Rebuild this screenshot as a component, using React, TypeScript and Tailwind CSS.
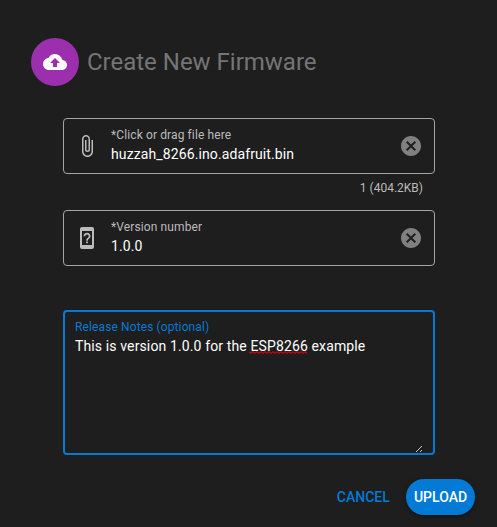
import type { ReactNode } from "react";
import { MdAttachFile, MdCancel, MdCloudUpload, MdDeviceUnknown } from "react-icons/md";

type FieldProps = { icon: ReactNode; label: string; value: string };

function Field({ icon, label, value }: FieldProps) {
  return (
    <div className="flex h-14 items-center rounded border border-[#a5a5a5] px-[11px]">
      <span className="mr-3 size-6 text-[#bbbbbb]">{icon}</span>
      <div className="flex-1 pb-[3px]">
        <div className="text-xs leading-[18px] tracking-[0.0094em] text-[#bbbbbb]">{label}</div>
        <div className="text-sm leading-5 tracking-[0.0080em] text-white">{value}</div>
      </div>
      <MdCancel className="size-6 text-[#808080]" />
    </div>
  );
}

// Spell-checker squiggle under a flagged word
function Misspelled({ children }: { children: ReactNode }) {
  return (
    <span className="relative inline-block">
      {children}
      <svg className="absolute -left-px bottom-[2px] h-[3px] w-[58px]" viewBox="0 0 58 3">
        <defs>
          <pattern id="squiggle" width="4" height="3" patternUnits="userSpaceOnUse">
            <path d="M-1 1.5 Q0 0.2 1 1.5 T3 1.5 T5 1.5" fill="none" stroke="#e3000f" strokeWidth="1.1" />
          </pattern>
        </defs>
        <rect width="58" height="3" fill="url(#squiggle)" />
      </svg>
    </span>
  );
}

function ResizeGrip() {
  return (
    <svg className="absolute right-[11px] bottom-px size-1.5" viewBox="0 0 6 6" shapeRendering="crispEdges" fill="#c8c8c8">
      {[0, 1, 2, 3, 4, 5].map((i) => (
        <rect key={i} x={i} y={5 - i} width="1" height="1" />
      ))}
      <rect x="4" y="5" width="1" height="1" />
      <rect x="5" y="4" width="1" height="1" />
    </svg>
  );
}

export default function App() {
  return (
    <div className="h-[527px] w-[497px] overflow-hidden bg-[#1e1e1e] pt-[38px] font-['Roboto',sans-serif]">
      <header className="flex h-12 items-center gap-2 pl-[31px]">
        <span className="flex size-12 items-center justify-center rounded-full bg-[#9c2fae] text-white">
          <MdCloudUpload className="size-6" />
        </span>
        <h1 className="text-2xl leading-8 tracking-[-0.01px] text-[#757575]">Create New Firmware</h1>
      </header>

      <main className="mt-8 mr-[62px] ml-[63px]">
        <Field icon={<MdAttachFile className="size-6" />} label="*Click or drag file here" value="huzzah_8266.ino.adafruit.bin" />
        <div className="h-9 pt-[8px] pr-3 text-right text-xs leading-3 text-[#bbbbbb]">1 (404.2KB)</div>
        <Field icon={<MdDeviceUnknown className="size-6" />} label="*Version number" value="1.0.0" />

        <div className="relative mt-11 h-[145px] rounded border-2 border-[#027ad6] px-[10px] pt-[6px]">
          <div className="text-xs leading-[18px] tracking-[0.0094em] text-[#027ad6]">Release Notes (optional)</div>
          <div className="text-sm leading-5 tracking-[0.0090em] text-white">
            This is version 1.0.0 for the <Misspelled>ESP8266</Misspelled> example
          </div>
          <ResizeGrip />
        </div>
      </main>

      <footer className="mt-6 flex h-9 items-center justify-end pr-[22px] text-sm font-medium">
        <button className="mr-[16.25px] text-[#027ad6]">CANCEL</button>
        <button className="h-9 w-[69px] rounded-full bg-[#027ad6] text-white shadow-[0_1px_5px_rgba(0,0,0,0.2),0_2px_2px_rgba(0,0,0,0.14),0_3px_1px_-2px_rgba(0,0,0,0.12)]">
          UPLOAD
        </button>
      </footer>
    </div>
  );
}
